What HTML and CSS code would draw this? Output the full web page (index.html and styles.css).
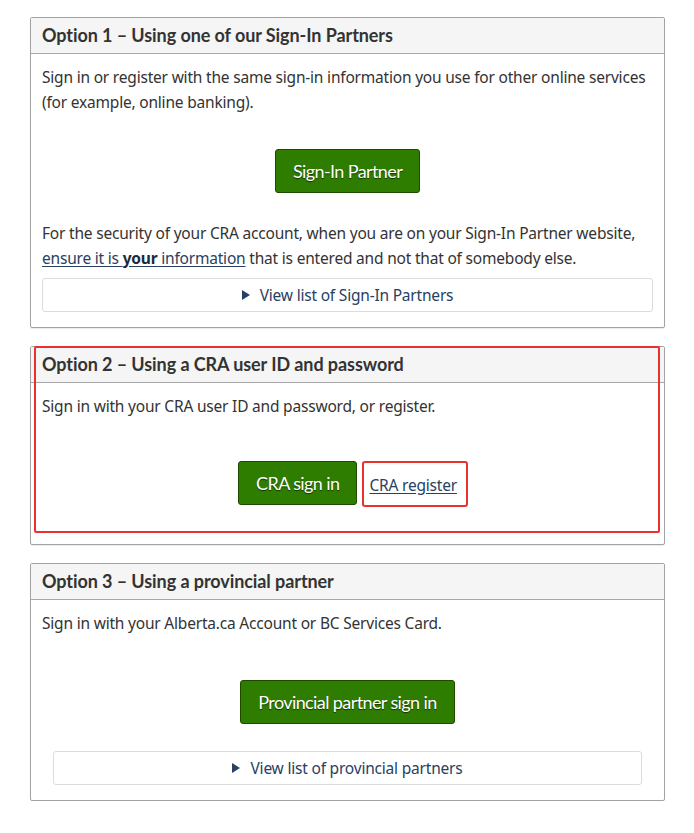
FILE: index.html
```html
<!DOCTYPE html>
<html lang="en">
<head>
<meta charset="utf-8">
<link rel="stylesheet" href="styles.css">
</head>
<body>
<main class="page">
  <section class="panel">
    <div class="panel-heading"><h3>Option 1 – Using one of our Sign-In Partners</h3></div>
    <div class="panel-body">
      <p>Sign in or register with the same sign-in information you use for other online services (for example, online banking).</p>
      <div class="actions actions-1"><a class="btn" href="#">Sign-In Partner</a></div>
      <p class="security">For the security of your CRA account, when you are on your Sign-In Partner website, <a class="link" href="#">ensure it is <strong>your</strong> information</a> that is entered and not that of somebody else.</p>
      <div class="summary"><span class="tri"></span>View list of Sign-In Partners</div>
    </div>
  </section>

  <section class="panel panel-2">
    <div class="highlight"></div>
    <div class="panel-heading"><h3>Option 2 – Using a CRA user ID and password</h3></div>
    <div class="panel-body">
      <p>Sign in with your CRA user ID and password, or register.</p>
      <div class="actions actions-2">
        <a class="btn" href="#">CRA sign in</a>
        <a class="link reg" href="#">CRA register</a>
      </div>
    </div>
  </section>

  <section class="panel">
    <div class="panel-heading"><h3>Option 3 – Using a provincial partner</h3></div>
    <div class="panel-body">
      <p>Sign in with your Alberta.ca Account or BC Services Card.</p>
      <div class="actions actions-3"><a class="btn" href="#">Provincial partner sign in</a></div>
      <div class="summary summary-wide"><span class="tri"></span>View list of provincial partners</div>
    </div>
  </section>
</main>
</body>
</html>
```

FILE: styles.css
```css
* { box-sizing: border-box; }
html, body { margin: 0; padding: 0; background: #fff; }
body {
  font-family: "Noto Sans", sans-serif;
  font-size: 15.5px;
  color: #333;
}
.page {
  padding: 17px 29px 0 30px;
  display: flex;
  flex-direction: column;
  gap: 18px;
}
.panel {
  position: relative;
  border: 1px solid #a3a3a3;
  border-radius: 2px;
  box-shadow: 0 1px 1px rgba(0,0,0,.08);
}
.panel-heading {
  background: #f5f5f5;
  border-bottom: 1px solid #a8a8a8;
  height: 36px;
  padding: 0 11px;
  display: flex;
  align-items: center;
}
.panel-heading h3 {
  margin: 0 0 1px;
  font-family: Lato, sans-serif;
  font-weight: 700;
  font-size: 18px;
  color: #333;
  letter-spacing: -0.08px;
}
.panel-body {
  padding: 11px 11px 15px 11px;
}
.panel-body p {
  margin: 0;
  line-height: 25px;
  letter-spacing: -0.2px;
}
.actions {
  display: flex;
  justify-content: center;
  align-items: center;
}
.actions-1 { margin: 34px 0 28px; }
.actions-2 { margin: 42px 0 24px; gap: 12px; }
.actions-3 { margin: 44px 0 27px; }
.btn {
  display: inline-flex;
  align-items: center;
  height: 44px;
  padding: 0 17px;
  background: #2e7d00;
  border: 1px solid #1d4a00;
  border-radius: 3px;
  color: #fff;
  font-family: Lato, sans-serif;
  font-size: 18px;
  letter-spacing: -0.6px;
  text-decoration: none;
  text-shadow: 0 1px 1px rgba(0,0,0,.6);
}
.link {
  color: #284162;
  text-decoration: underline;
  text-underline-offset: 2px;
}
.link strong { color: #1a2a40; }
.reg {
  position: relative;
  margin-top: 4px;
  line-height: 20px;
  letter-spacing: -0.2px;
}
.reg::after {
  content: "";
  position: absolute;
  left: -7px;
  right: -11px;
  top: -14px;
  bottom: -12px;
  border: 2px solid #e8322e;
  border-radius: 3px;
  pointer-events: none;
}
.summary {
  margin-top: 7px;
  height: 34px;
  border: 1px solid #dcdcdc;
  border-radius: 3px;
  display: flex;
  align-items: center;
  justify-content: center;
  color: #284162;
  letter-spacing: -0.2px;
}
.summary-wide { margin: 0 11px; }
.tri {
  width: 0; height: 0;
  border-left: 8px solid #284162;
  border-top: 5px solid transparent;
  border-bottom: 5px solid transparent;
  margin-right: 10px;
}
.highlight {
  position: absolute;
  left: 3px;
  top: -1px;
  right: 4px;
  bottom: 11px;
  border: 2px solid #e8322e;
  border-radius: 2px;
  pointer-events: none;
}
```
